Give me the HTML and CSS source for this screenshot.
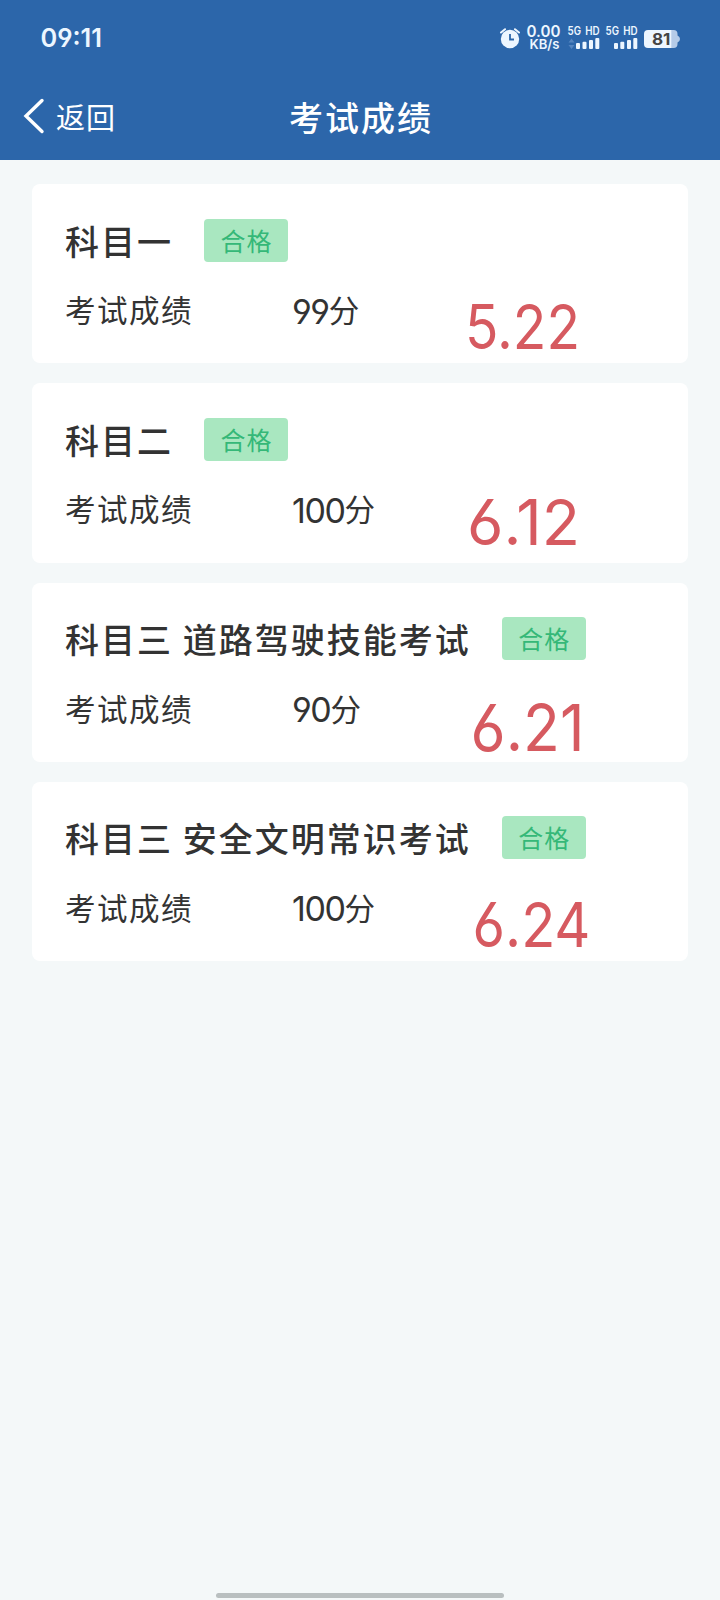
FILE: index.html
```html
<!DOCTYPE html>
<html lang="zh-CN">
<head>
    <meta charset="UTF-8">
    <meta name="viewport" content="width=device-width, initial-scale=1.0">
    <title>考试成绩</title>
    <link rel="stylesheet" href="styles.css">
</head>
<body>
    <header>
        <div class="status-bar">
            <svg class="clock" width="64" height="24">
                <text x="0.5" y="21.5" font-size="26" textLength="61.5" lengthAdjust="spacingAndGlyphs">09:11</text>
            </svg>
            <svg class="status-icons" width="220" height="60">
                <!-- alarm -->
                <circle cx="30" cy="29" r="9.2"/>
                <path class="line" d="M21 22.5l4-3.3M39 22.5l-4-3.3"/>
                <path class="hand" d="M30 24v5.5h4"/>
                <!-- network speed -->
                <text x="46.5" y="27.3" font-size="15.3" textLength="34" lengthAdjust="spacingAndGlyphs">0.00</text>
                <text x="49.5" y="39.3" font-size="13.5" textLength="30" lengthAdjust="spacingAndGlyphs">KB/s</text>
                <!-- signal -->
                <text class="net" x="87.5" y="25" font-size="11.3" textLength="32" lengthAdjust="spacingAndGlyphs">5G HD</text>
                <path class="dim" d="M88.5 32.5l3-4 3 4zM88.5 35l3 4 3-4z"/>
                <rect x="96" y="33" width="4" height="6" rx="1"/>
                <rect x="102.5" y="31.7" width="4" height="7.3" rx="1"/>
                <rect x="109" y="30" width="4" height="9" rx="1"/>
                <rect x="115.3" y="28" width="4" height="11" rx="1"/>
                <text class="net" x="125.5" y="25" font-size="11.3" textLength="32" lengthAdjust="spacingAndGlyphs">5G HD</text>
                <rect x="134" y="33" width="4" height="6" rx="1"/>
                <rect x="140.3" y="31.7" width="4" height="7.3" rx="1"/>
                <rect x="147" y="30" width="4" height="9" rx="1"/>
                <rect x="153.3" y="28" width="4" height="11" rx="1"/>
                <!-- battery -->
                <path class="battery-rest" d="M190 20h3.5a4 4 0 0 1 4 4v1.5q2.5 1 2.5 3.5t-2.5 3.5V34a4 4 0 0 1-4 4H190z"/>
                <path d="M168 20h23.3v18H168a4 4 0 0 1-4-4V24a4 4 0 0 1 4-4z"/>
                <text class="battery-text" x="172" y="35" font-size="16.3" textLength="18.5" lengthAdjust="spacingAndGlyphs">81</text>
            </svg>
        </div>
        <nav>
            <a class="back">
                <svg width="22" height="36"><path d="M19 2.5L3 18l16 15.5"/></svg>
                <span>返回</span>
            </a>
            <h1>考试成绩</h1>
        </nav>
    </header>

    <main>
        <section class="card">
            <div class="subject"><h2>科目一</h2><span class="tag">合格</span></div>
            <div class="result"><span class="label">考试成绩</span><span class="num">99</span><span>分</span></div>
            <svg class="note note-1" width="112" height="50">
                <text x="-3" y="47.5" font-size="61.5" textLength="115" lengthAdjust="spacingAndGlyphs">5.22</text>
            </svg>
        </section>
        <section class="card">
            <div class="subject"><h2>科目二</h2><span class="tag">合格</span></div>
            <div class="result"><span class="label">考试成绩</span><span class="num">100</span><span>分</span></div>
            <svg class="note note-2" width="112" height="50">
                <text x="-3" y="47.5" font-size="63" textLength="113" lengthAdjust="spacingAndGlyphs">6.12</text>
            </svg>
        </section>
        <section class="card">
            <div class="subject"><h2>科目三 道路驾驶技能考试</h2><span class="tag">合格</span></div>
            <div class="result"><span class="label">考试成绩</span><span class="num">90</span><span>分</span></div>
            <svg class="note note-3" width="112" height="50">
                <text x="-2.5" y="48" font-size="65" textLength="114" lengthAdjust="spacingAndGlyphs">6.21</text>
            </svg>
        </section>
        <section class="card">
            <div class="subject"><h2>科目三 安全文明常识考试</h2><span class="tag">合格</span></div>
            <div class="result"><span class="label">考试成绩</span><span class="num">100</span><span>分</span></div>
            <svg class="note note-4" width="118" height="50">
                <text x="-2.5" y="47.5" font-size="62" textLength="118" lengthAdjust="spacingAndGlyphs">6.24</text>
            </svg>
        </section>
    </main>
    <div class="home-bar"></div>
</body>
</html>
```
FILE: styles.css
```css
* {
    box-sizing: border-box;
}
body {
    display: flex;
    flex-direction: column;
    height: 1600px;
    margin: 0;
    background-color: #f4f8f9;
    color: #333333;
    font-family: "Noto Sans CJK SC", sans-serif;
}
svg {
    display: block;
    overflow: visible;
}
svg text {
    font-family: Inter, sans-serif;
}
header {
    height: 160px;
    background-color: #2c66aa;
    color: #ffffff;
}
.status-bar {
    display: flex;
    justify-content: space-between;
    height: 74px;
    padding: 10px 20px 0 40px;
    fill: #edf6ff;
    font-weight: 600;
}
.clock {
    margin-top: 15px;
}
.clock, .num, .note {
    font-feature-settings: "cv03", "cv04";
}
.status-icons .line {
    fill: none;
    stroke: #edf6ff;
    stroke-width: 2;
    stroke-linecap: round;
}
.status-icons .hand {
    fill: none;
    stroke: #2c66aa;
    stroke-width: 1.8;
}
.status-icons .net {
    word-spacing: 2px;
}
.status-icons .dim {
    fill: #5585c0;
}
.status-icons .battery-rest {
    fill: #b5cbe8;
}
.status-icons .battery-text {
    fill: #444444;
    font-weight: 700;
}
nav {
    display: grid;
    grid-template-columns: 240px 240px 240px;
    align-items: center;
    height: 86px;
}
.back {
    display: flex;
    align-items: center;
    gap: 11px;
    margin-top: -2px;
    padding-left: 23px;
    font-size: 29px;
    line-height: 40px;
    letter-spacing: 1px;
}
.back path {
    fill: none;
    stroke: #ffffff;
    stroke-width: 3.4;
    stroke-linecap: round;
}
h1, h2 {
    margin: 0;
    font-size: 34px;
    font-weight: 500;
    letter-spacing: 2px;
    line-height: 48px;
    white-space: nowrap;
}
h1 {
    padding-left: 2px;
    text-align: center;
}
main {
    display: flex;
    flex: 1;
    flex-direction: column;
    gap: 20px;
    padding: 24px 32px 0;
}
.card {
    position: relative;
    height: 179.3px;
    padding: 32px 32px 0 33px;
    border-radius: 8px;
    background: #ffffff;
}
.subject {
    display: flex;
    align-items: center;
    gap: 31px;
    height: 48px;
}
.subject h2 {
    padding-top: 1px;
}
.tag {
    width: 84px;
    height: 43px;
    padding-left: 1px;
    border-radius: 4px;
    background: #a9e7c0;
    color: #35b878;
    font-size: 25px;
    letter-spacing: 1px;
    line-height: 42px;
    text-align: center;
}
.result {
    display: flex;
    align-items: center;
    height: 44px;
    margin-top: 23px;
    font-size: 30.5px;
    letter-spacing: 1.5px;
}
.label {
    width: 227px;
}
.num {
    padding-top: 4px;
    font-family: Inter, sans-serif;
    font-size: 34px;
    letter-spacing: -1.4px;
}
/* exam date written over each card */
.note {
    position: absolute;
    fill: #d65a60;
}
.note-1 {
    left: 436px;
    top: 117px;
}
.note-2 {
    left: 438px;
    top: 114px;
}
.note-3 {
    left: 441px;
    top: 120px;
}
.note-4 {
    left: 443px;
    top: 117px;
}
.home-bar {
    width: 288px;
    height: 5px;
    margin: 0 auto 2px;
    border-radius: 3px;
    background: #b9bfc0;
}
```
